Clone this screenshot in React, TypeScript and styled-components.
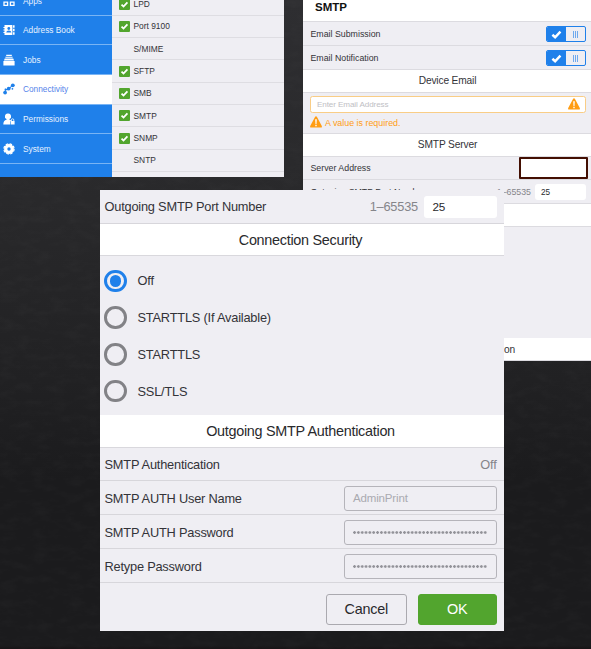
import React from "react";
import styled, { createGlobalStyle } from "styled-components";

const GlobalStyle = createGlobalStyle`
  * { box-sizing: border-box; }
  body { margin: 0; background: #1d1d1f; font-family: "Liberation Sans", Arial, sans-serif; color: #333338; }
`;

const Stage = styled.div`
  position: relative;
  width: 591px;
  height: 649px;
  overflow: hidden;
  display: flex;
  justify-content: space-between;
  align-items: flex-start;
  background: linear-gradient(#2e2e31 0, #29292b 200px, #212123 380px, #1b1b1d 480px, #1b1b1d 646px, #181517 648px);
`;

const Texture = styled.svg`
  position: absolute;
  inset: 0;
  width: 100%;
  height: 100%;
  opacity: 0.035;
`;

const SettingsWindow = styled.div`
  position: relative;
  display: grid;
  grid-template-columns: 111.5px 1fr;
  width: 284px;
  height: 177px;
  overflow: hidden;
`;

const Sidebar = styled.nav`
  display: flex;
  flex-direction: column;
  margin-top: -13.8px;
  background: #1f80ea;
`;

const NavItem = styled.div<{ $active?: boolean }>`
  display: flex;
  flex: none;
  align-items: center;
  gap: 8px;
  height: 29.6px;
  padding: 0.4px 0 0 3px;
  border-bottom: 1px solid #79b4f4;
  background: ${(p) => (p.$active ? "#fff" : "#1f80ea")};
  color: ${(p) => (p.$active ? "#5583ea" : "#e6f1ff")};
  font-size: 8.3px;

  svg { width: 12px; height: 12px; flex: none; color: ${(p) => (p.$active ? "#1f80ea" : "#fff")}; }
`;

const ProtocolList = styled.div`
  display: flex;
  flex-direction: column;
  margin-top: -6.6px;
  background: #efeef3;
`;

const ProtocolRow = styled.div`
  display: grid;
  flex: none;
  grid-template-columns: 11px 1fr;
  align-items: center;
  column-gap: 4px;
  height: 22.35px;
  padding-left: 7px;
  border-bottom: 1px solid #dedde2;
  font-size: 8.4px;
`;

const CheckBox = styled.span`
  display: flex;
  width: 11px;
  height: 11px;
  border-radius: 1px;
  background: #52a52e;
`;

const SmtpWindow = styled.section`
  position: relative;
  width: 288px;
  height: 361px;
  display: flex;
  flex-direction: column;
  background: #efeef3;
`;

const Title = styled.h1`
  margin: 0;
  height: 22px;
  padding: 1px 0 0 12px;
  border-bottom: 1px solid #dcdbe0;
  background: #fff;
  color: #111;
  font-size: 11.5px;
  line-height: 13px;
`;

const SmallRow = styled.div<{ $h: number }>`
  display: flex;
  flex: none;
  align-items: center;
  justify-content: space-between;
  height: ${(p) => p.$h}px;
  padding: 1px 5px 0 7.5px;
  border-bottom: 1px solid #dcdbe0;
  font-size: 8.8px;
`;

const SmallHeader = styled.h2<{ $h: number }>`
  display: flex;
  flex: none;
  align-items: center;
  justify-content: center;
  margin: 0;
  height: ${(p) => p.$h}px;
  padding-left: 1px;
  border-bottom: 1px solid #dcdbe0;
  background: #fff;
  font-size: 10.2px;
  letter-spacing: -0.15px;
  font-weight: 400;
`;

const Toggle = styled.span`
  display: grid;
  grid-template-columns: 1fr 1fr;
  width: 40px;
  height: 16px;
  border: 1px solid #1f80ea;
  border-radius: 2px;
  background: #efeef3;
  overflow: hidden;
`;

const ToggleOn = styled.span`
  display: flex;
  align-items: center;
  justify-content: center;
  background: #1f80ea;
`;

const ToggleGrip = styled.span`
  display: flex;
  align-items: center;
  justify-content: center;
  gap: 1px;
  i { width: 1px; height: 7px; background: #6fa9ee; }
`;

const EmailBlock = styled.div`
  display: flex;
  flex-direction: column;
  height: 41px;
  flex: none;
  gap: 3px;
  padding: 3px 5px 0 7px;
  border-bottom: 1px solid #dcdbe0;
`;

const EmailInput = styled.div`
  display: flex;
  align-items: center;
  justify-content: space-between;
  height: 17.5px;
  padding: 0 5px 0 6px;
  border: 1px solid #f9cd86;
  border-radius: 2.5px;
  background: #fff;
  color: #c0c0c4;
  font-size: 8.1px;
  letter-spacing: -0.1px;
`;

const Warning = styled.div`
  display: flex;
  align-items: center;
  gap: 3px;
  color: #ff9d14;
  font-size: 8.9px;
`;

const WarningText = styled.span`
  padding-top: 2px;
`;

const AddressBox = styled.span`
  width: 69px;
  height: 22px;
  margin: -1px -2px 0 0;
  border: 2px solid #430f02;
  border-radius: 1px;
  background: #fff;
`;

const PortGroup = styled.span<{ $large?: boolean }>`
  display: flex;
  align-items: center;
  gap: ${(p) => (p.$large ? 5.5 : 4)}px;
  color: #85858a;
`;

const PortValue = styled.span<{ $large?: boolean }>`
  display: flex;
  align-items: center;
  width: ${(p) => (p.$large ? 73 : 51)}px;
  height: ${(p) => (p.$large ? 22 : 16)}px;
  padding-left: ${(p) => (p.$large ? 9 : 6)}px;
  border-radius: 3px;
  background: #fff;
  color: #29292c;
  font-size: ${(p) => (p.$large ? 11.7 : 8.2)}px;
`;

const SmallSpacer = styled.div`
  height: 111px;
  flex: none;
`;

const Dialog = styled.section`
  position: absolute;
  left: 100px;
  top: 190px;
  width: 404px;
  height: 441px;
  display: flex;
  flex-direction: column;
  background: #efeef3;
`;

const Row = styled.div`
  display: flex;
  flex: none;
  align-items: center;
  justify-content: space-between;
  height: 33.95px;
  padding: 1px 7.5px 0 4.5px;
  border-bottom: 1px solid #d7d6db;
  font-size: 12.8px;
  letter-spacing: -0.21px;
`;

const Header = styled.h2`
  display: flex;
  flex: none;
  align-items: center;
  justify-content: center;
  margin: 0;
  height: 32.5px;
  padding: 0 3px 0 0;
  border-bottom: 1px solid #d9d8dd;
  background: #fff;
  font-size: 14.4px;
  letter-spacing: -0.28px;
  font-weight: 400;
  color: #29292c;
`;

const Options = styled.div`
  display: flex;
  flex-direction: column;
  height: 158.6px;
  flex: none;
  padding: 6px 0 0 4px;
`;

const Option = styled.div`
  display: flex;
  align-items: center;
  gap: 11px;
  height: 36.8px;
  font-size: 12.8px;
  letter-spacing: -0.2px;
`;

const Radio = styled.span<{ $on?: boolean }>`
  display: flex;
  align-items: center;
  justify-content: center;
  width: 22.5px;
  height: 22.5px;
  border: 3px solid ${(p) => (p.$on ? "#1f80ea" : "#828286")};
  border-radius: 50%;

  &::after {
    content: "";
    width: 11.5px;
    height: 11.5px;
    flex: none;
    border-radius: 50%;
    background: ${(p) => (p.$on ? "#1f80ea" : "transparent")};
  }
`;

const State = styled.span`
  color: #85858a;
`;

const Field = styled.span`
  display: flex;
  align-items: center;
  width: 153px;
  height: 25px;
  padding: 0 8.5px;
  border: 1px solid #b5b4ba;
  border-radius: 3px;
  color: #aaaab0;
  font-size: 11.5px;
  letter-spacing: -0.15px;
`;

const Dots = styled.span`
  width: 100%;
  height: 3px;
  background: radial-gradient(circle at 1.5px 1.5px, #929298 1px, transparent 1.6px) 0 0 / 3.85px 3px repeat-x;
`;

const Actions = styled.footer`
  display: flex;
  justify-content: flex-end;
  gap: 11px;
  padding: 11px 7px 0 0;
`;

const Button = styled.button<{ $primary?: boolean }>`
  width: ${(p) => (p.$primary ? 79.5 : 80.5)}px;
  height: 30.5px;
  padding: 0 0 1px;
  border: 1px solid ${(p) => (p.$primary ? "#52a52e" : "#aaa9af")};
  border-radius: 3px;
  background: ${(p) => (p.$primary ? "#52a52e" : "#efeef3")};
  color: ${(p) => (p.$primary ? "#fff" : "#29292c")};
  font: 14.4px "Liberation Sans", Arial, sans-serif;
  letter-spacing: -0.2px;
`;

const Check = ({ size = 11 }: { size?: number }) => (
  <svg width={size} height={size} viewBox="0 0 11 11" fill="none">
    <path d="M2.5 5.7 4.5 7.5 8.4 3.4" stroke="#fff" strokeWidth="1.8" />
  </svg>
);

const WarningIcon = () => (
  <svg width="12" height="12" viewBox="0 0 12 12">
    <path d="M6 0.3 Q6.6 .3 7 1.1 L11.8 10 Q12.2 11.5 11 11.5 H1 Q-.2 11.5 .2 10 L5 1.1 Q5.4 .3 6 .3Z" fill="#ff9d14" />
    <path d="M5.2 3.2h1.6L6.5 8h-1zM5.3 8.8h1.4v1.4H5.3z" fill="#fff" />
  </svg>
);

const icons: Record<string, React.ReactNode> = {
  Apps: (
    <g fill="none" stroke="currentColor" strokeWidth="1.3">
      <path d="M1 1h3.6v3.2H1zM7.4 1H11v3.2H7.4zM1 7.2h3.6v3.2H1zM7.4 7.2H11v3.2H7.4z" />
    </g>
  ),
  "Address Book": (
    <g>
      <path d="M1.5 1H9.4v10H1.5V9H.4V7.9h1.1V6.6H.4V5.4h1.1V4.1H.4V3h1.1zM10 1.2h1.6v2.6H10zM10 4.7h1.6v2.6H10zM10 8.2h1.6v2.6H10z" fill="currentColor" />
      <circle cx="5.8" cy="4.5" r="1.4" fill="#1f80ea" />
      <path d="M3.2 8.6q.2-2.2 2.6-2.2t2.6 2.2z" fill="#1f80ea" />
    </g>
  ),
  Jobs: <path d="M3.2.8h5.6v1.1H3.2zM2.4 2.7h7.2v1.1H2.4zM1.7 4.5h8.6l.7 2H1zM.4 7h11.2v4.5H.4z" fill="currentColor" />,
  Connectivity: (
    <g fill="currentColor">
      <path d="M2.3 9.6V6.4q2.5.6 3.6-.5T9.6 2" fill="none" stroke="currentColor" strokeWidth="1.1" />
      <circle cx="2.1" cy="9.6" r="1.9" />
      <circle cx="5.7" cy="5.6" r="1.9" />
      <circle cx="9.8" cy="2.3" r="1.9" />
      <circle cx="2.6" cy="6.3" r=".9" />
      <circle cx="9.4" cy="5.8" r=".9" />
    </g>
  ),
  Permissions: (
    <g>
      <path d="M5 .5a2.9 2.9 0 0 1 1.5 5.5v.8q1.7.4 2.1 1.4H7v3.3H.3Q.3 7.5 3.5 6.8V6A2.9 2.9 0 0 1 5 .5z" fill="currentColor" />
      <path d="M7.6 8h4v3.5h-4z" fill="currentColor" />
      <path d="M8.4 8V7a1.2 1.2 0 0 1 2.4 0v1" fill="none" stroke="currentColor" strokeWidth=".8" />
    </g>
  ),
  System: (
    <g fill="none" stroke="currentColor">
      <circle cx="6" cy="6" r="3.3" strokeWidth="3.2" />
      <circle cx="6" cy="6" r="5.1" strokeWidth="1.2" strokeDasharray="2.6 1.4" />
    </g>
  ),
};

const protocols: [string, boolean][] = [
  ["LPD", true],
  ["Port 9100", true],
  ["S/MIME", false],
  ["SFTP", true],
  ["SMB", true],
  ["SMTP", true],
  ["SNMP", true],
  ["SNTP", false],
];

const Switch = () => (
  <Toggle>
    <ToggleOn><Check size={15} /></ToggleOn>
    <ToggleGrip><i /><i /><i /></ToggleGrip>
  </Toggle>
);

export default function App() {
  return (
    <Stage>
      <GlobalStyle />
      <Texture aria-hidden="true">
        <filter id="grain">
          <feTurbulence type="fractalNoise" baseFrequency="0.06 0.13" numOctaves="4" seed="8" />
          <feColorMatrix values="0 0 0 0 .5  0 0 0 0 .5  0 0 0 0 .5  1.6 0 0 0 -.65" />
        </filter>
        <rect width="100%" height="100%" filter="url(#grain)" />
      </Texture>

      <SettingsWindow>
        <Sidebar>
          {Object.keys(icons).map((name) => (
            <NavItem key={name} $active={name === "Connectivity"}>
              <svg viewBox="0 0 12 12">{icons[name]}</svg>
              {name}
            </NavItem>
          ))}
        </Sidebar>
        <ProtocolList>
          {protocols.map(([name, enabled]) => (
            <ProtocolRow key={name}>
              {enabled ? <CheckBox><Check /></CheckBox> : <span />}
              {name}
            </ProtocolRow>
          ))}
        </ProtocolList>
      </SettingsWindow>

      <SmtpWindow>
        <Title>SMTP</Title>
        <SmallRow $h={23.5}>Email Submission<Switch /></SmallRow>
        <SmallRow $h={24}>Email Notification<Switch /></SmallRow>
        <SmallHeader $h={23}>Device Email</SmallHeader>
        <EmailBlock>
          <EmailInput>Enter Email Address<WarningIcon /></EmailInput>
          <Warning><WarningIcon /><WarningText>A value is required.</WarningText></Warning>
        </EmailBlock>
        <SmallHeader $h={23}>SMTP Server</SmallHeader>
        <SmallRow $h={23.5}>Server Address<AddressBox /></SmallRow>
        <SmallRow $h={24}>
          Outgoing SMTP Port Number
          <PortGroup>1–65535<PortValue>25</PortValue></PortGroup>
        </SmallRow>
        <SmallHeader $h={23}>Connection Security</SmallHeader>
        <SmallSpacer />
        <SmallHeader $h={23}>Outgoing SMTP Authentication</SmallHeader>
      </SmtpWindow>

      <Dialog>
        <Row>
          Outgoing SMTP Port Number
          <PortGroup $large>1–65535<PortValue $large>25</PortValue></PortGroup>
        </Row>
        <Header>Connection Security</Header>
        <Options>
          <Option><Radio $on />Off</Option>
          <Option><Radio />STARTTLS (If Available)</Option>
          <Option><Radio />STARTTLS</Option>
          <Option><Radio />SSL/TLS</Option>
        </Options>
        <Header>Outgoing SMTP Authentication</Header>
        <Row>SMTP Authentication<State>Off</State></Row>
        <Row>SMTP AUTH User Name<Field>AdminPrint</Field></Row>
        <Row>SMTP AUTH Password<Field><Dots /></Field></Row>
        <Row>Retype Password<Field><Dots /></Field></Row>
        <Actions>
          <Button>Cancel</Button>
          <Button $primary>OK</Button>
        </Actions>
      </Dialog>
    </Stage>
  );
}
